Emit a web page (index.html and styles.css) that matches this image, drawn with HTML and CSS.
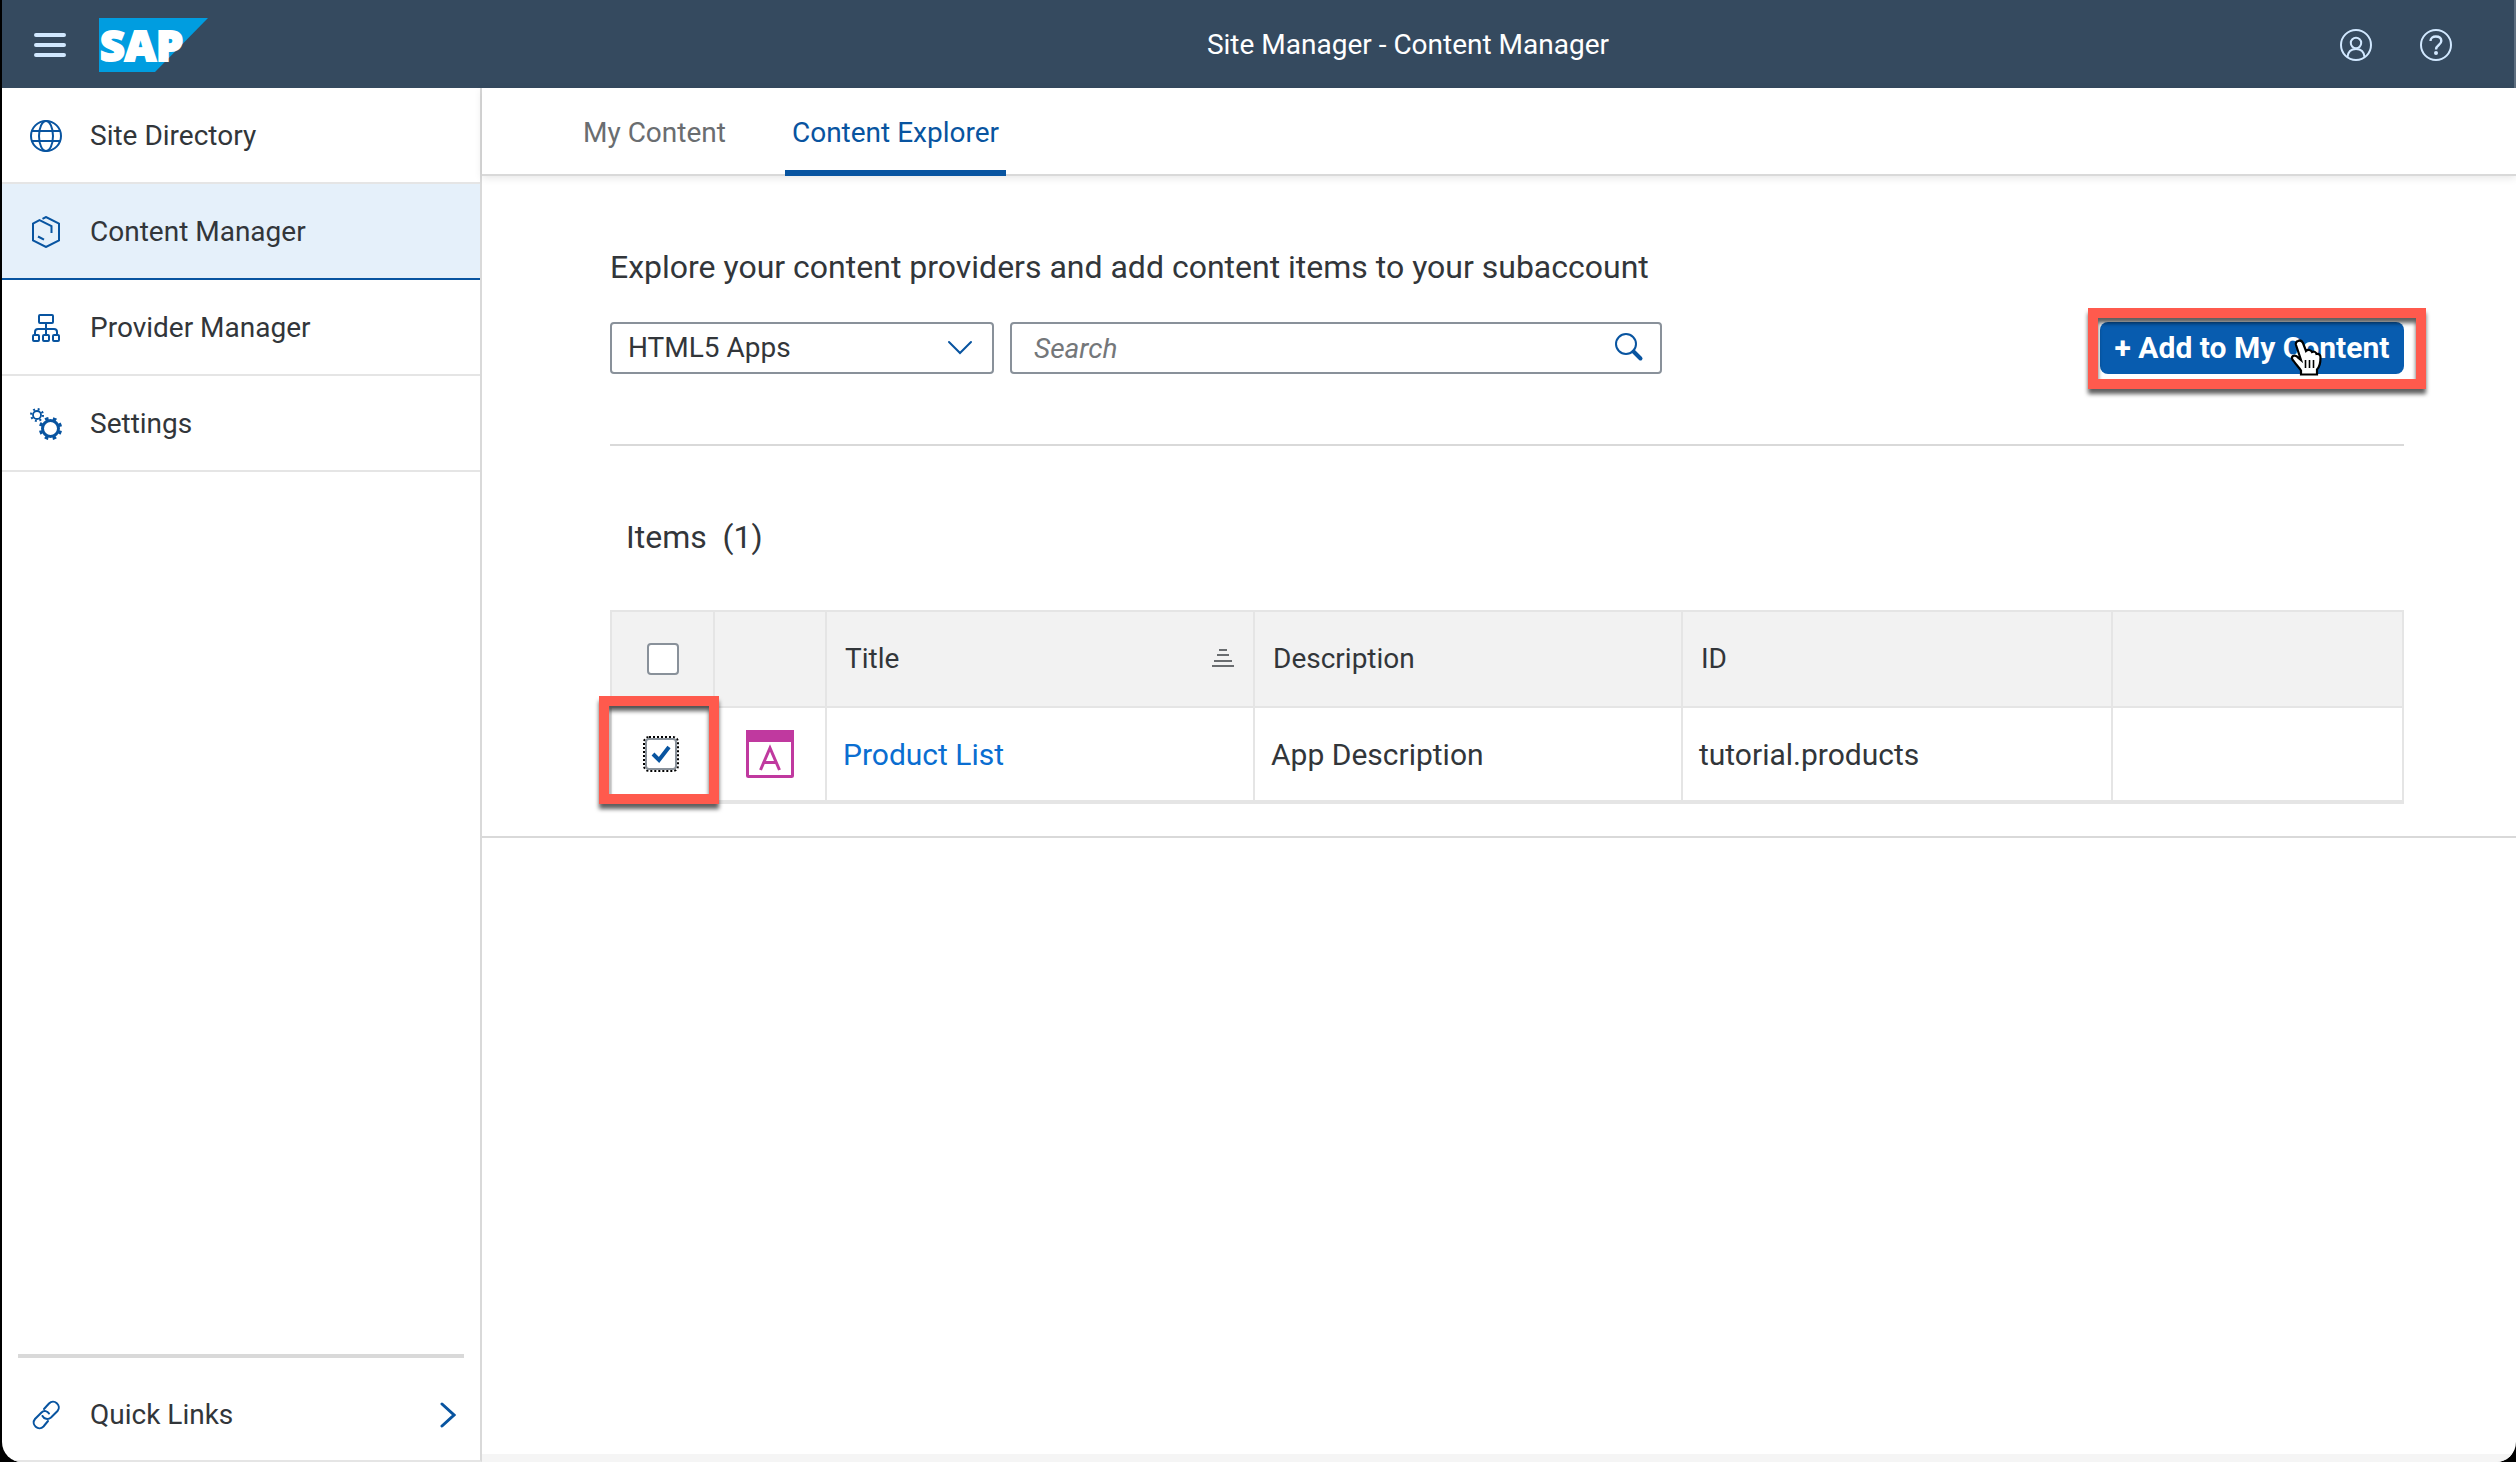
FILE: index.html
```html
<!DOCTYPE html>
<html lang="en">
<head>
<meta charset="utf-8">
<title>Site Manager - Content Manager</title>
<link rel="stylesheet" href="styles.css">
</head>
<body>
<div class="window">
  <header class="shell">
    <div class="shell-start">
      <button class="icon-button" type="button" aria-label="Menu">
        <svg width="32" height="24" viewBox="0 0 32 24"><g stroke="#d1e8ff" stroke-width="4" stroke-linecap="round"><path d="M2 2h28M2 12h28M2 22h28"/></g></svg>
      </button>
      <svg class="logo" width="110" height="54" viewBox="0 0 110 54" role="img" aria-label="SAP">
        <path d="M0 0h109L56 54H0z" fill="#009de0"/>
        <text class="logo-text" x="1" y="43">SAP</text>
      </svg>
    </div>
    <h1 class="shell-title">Site Manager - Content Manager</h1>
    <div class="shell-end">
      <button class="icon-button" type="button" aria-label="Profile">
        <svg width="32" height="32" viewBox="0 0 32 32" fill="none" stroke="#d1e8ff" stroke-width="2"><circle cx="16" cy="16" r="15"/><circle cx="16" cy="14" r="5.2"/><path d="M7.5 28c.5-5.500 4-8 8.500-8s8 2.500 8.500 8"/></svg>
      </button>
      <button class="icon-button" type="button" aria-label="Help">
        <svg width="32" height="32" viewBox="0 0 32 32" fill="none" stroke="#d1e8ff" stroke-width="2"><circle cx="16" cy="16" r="15"/><path d="M10.500 12c0-3 2.500-4.500 5.300-4.500 3 0 5.500 1.500 5.500 4.500 0 4-5.300 4-5.300 8.500" stroke-width="2.400"/><circle cx="16" cy="24" r="2" fill="#d1e8ff" stroke="none"/></svg>
      </button>
    </div>
  </header>
  <div class="body">
    <nav class="sidebar">
      <ul class="nav-list">
        <li><a class="nav-item" href="#sites">
          <svg width="32" height="32" viewBox="0 0 32 32" fill="none" stroke="#0854a0" stroke-width="2"><circle cx="16" cy="16" r="15"/><ellipse cx="16" cy="16" rx="7" ry="15"/><path d="M2 11h28M2 21h28"/></svg>
          Site Directory</a></li>
        <li><a class="nav-item nav-item-active" href="#content">
          <svg width="32" height="32" viewBox="0 0 32 32" fill="none" stroke="#0854a0" stroke-width="2"><path d="M12.500 2.800 16 1l13 6.500v17L16 31 3 24.500v-17L9.500 4.200l12 6V17M8 20.500l6 3.200"/></svg>
          Content Manager</a></li>
        <li><a class="nav-item" href="#providers">
          <svg width="32" height="32" viewBox="0 0 32 32" fill="none" stroke="#0854a0" stroke-width="2"><rect x="9" y="3" width="14" height="8" rx="1"/><rect x="3" y="23" width="6" height="6" rx="1"/><rect x="13" y="23" width="6" height="6" rx="1"/><rect x="23" y="23" width="6" height="6" rx="1"/><path d="M16 11v12M5 23v-3q0-3 3-3h16q3 0 3 3v3"/></svg>
          Provider Manager</a></li>
        <li><a class="nav-item" href="#settings">
          <svg width="32" height="32" viewBox="0 0 32 32" fill="none" stroke="#0854a0"><circle cx="7" cy="7" r="4" stroke-width="1.800"/><circle cx="7" cy="7" r="5.900" stroke-width="2.200" stroke-dasharray="1.900 2.734"/><circle cx="20.500" cy="20.500" r="8" stroke-width="3"/><circle cx="20.500" cy="20.500" r="10.200" stroke-width="3" stroke-dasharray="3.600 4.411" transform="rotate(12 20.500 20.500)"/></svg>
          Settings</a></li>
      </ul>
      <div class="quick">
        <button class="quick-links" type="button">
          <svg width="32" height="32" viewBox="0 0 32 32" fill="none" stroke="#0854a0" stroke-width="2" stroke-linecap="round"><path d="M14 10l5-5.500c5-5 13 2 8.500 7.500l-6.500 6.500c-3 2.500-7 1.500-8.500-1.500M18 22l-4.500 5.500c-5 5-13-2-8.500-7.500l6.500-6.500c2.500-2.500 6-1.500 7.500 1"/></svg>
          <span class="quick-label">Quick Links</span>
          <svg width="16" height="26" viewBox="0 0 16 26" fill="none" stroke="#0854a0" stroke-width="3" stroke-linecap="round"><path d="M2 2l12 11L2 24"/></svg>
        </button>
      </div>
    </nav>
    <main class="main">
      <div class="tabs">
        <a class="tab" href="#mine">My Content</a>
        <a class="tab tab-active" href="#explorer">Content Explorer</a>
      </div>
      <section class="panel">
        <h2 class="heading">Explore your content providers and add content items to your subaccount</h2>
        <div class="toolbar">
          <div class="select-box">
            <select class="select" aria-label="Content provider"><option>HTML5 Apps</option></select>
            <svg class="chevron" width="26" height="16" viewBox="0 0 26 16" fill="none" stroke="#0854a0" stroke-width="2" stroke-linecap="round"><path d="M2 2l11 11L24 2"/></svg>
          </div>
          <div class="search-box">
            <input class="search" type="text" placeholder="Search" aria-label="Search">
            <button class="icon-button" type="button" aria-label="Run search">
              <svg width="30" height="30" viewBox="0 0 30 30" fill="none" stroke="#0854a0" stroke-linecap="round"><circle cx="12" cy="11" r="10" stroke-width="2"/><path d="M19.500 18.500l7 7" stroke-width="4"/></svg>
            </button>
          </div>
          <div class="add-box">
            <button class="add" type="button">+ Add to My Content</button>
            <div class="mark mark-add"></div>
            <svg class="cursor" width="32" height="38" viewBox="0 0 32 38"><path d="M8 2c2-1 4 0 5 2l3 8c2-2 5-1 6 1 2-1 4 0 4.500 2 3-.5 4 1.500 4 3.500 0 5-.5 9-3.500 12v5H11v-4c-2-3-5-6-7-9-2-2-3-4-1-5.500 2-1 4 0 5.500 2L11 21 6 6c-.5-2 .5-3.500 2-4z" fill="#fff" stroke="#000" stroke-width="2.200"/><path d="M15.500 21v8M19.500 21v8M23.500 21v8" stroke="#000" stroke-width="1.600"/></svg>
          </div>
        </div>
        <h3 class="items-title">Items&nbsp; (1)</h3>
        <table class="table">
          <colgroup><col class="col-check"><col class="col-icon"><col class="col-text"><col class="col-text"><col class="col-id"><col></colgroup>
          <thead><tr>
            <th class="center"><input class="check" type="checkbox" aria-label="Select all"></th>
            <th></th>
            <th><div class="sort">Title<svg width="24" height="20" viewBox="0 0 24 20" stroke="#6a6d70" stroke-width="2"><path d="M8 1h8M6 6h12M3 12h18M1 17h22"/></svg></div></th>
            <th>Description</th><th>ID</th><th></th>
          </tr></thead>
          <tbody><tr>
            <td class="center marked"><input class="check check-focus" type="checkbox" checked aria-label="Select Product List"><div class="mark mark-check"></div></td>
            <td class="center"><svg class="app-icon" width="48" height="48" viewBox="0 0 48 48" fill="none" stroke="#c0399f"><rect x="1.500" y="1.500" width="45" height="45" rx="1" stroke-width="3"/><path d="M0 6h48" stroke-width="12"/><path d="M14.500 40L24 18l9.500 22M18 32.500h12" stroke-width="3"/></svg></td>
            <td><a class="link" href="#product-list">Product List</a></td>
            <td>App Description</td><td>tutorial.products</td><td></td>
          </tr></tbody>
        </table>
      </section>
    </main>
  </div>
</div>
</body>
</html>
```
FILE: styles.css
```css
* { box-sizing: border-box; }
body { margin: 0; background: #000; color: #32363a; font: 28px/36px Roboto, "Liberation Sans", sans-serif; }
h1, h2, h3, ul { margin: 0; padding: 0; font-weight: 400; list-style: none; }
a { color: inherit; text-decoration: none; }
svg { display: block; flex: none; }
button, input, select { font: inherit; color: inherit; }
.window { display: flex; flex-direction: column; min-height: 100vh; margin-left: 2px; background: #fff; border-radius: 0 0 20px 20px; overflow: hidden; }
.shell { display: grid; grid-template-columns: 442px 1fr auto; align-items: center; height: 88px; padding: 1px 62px 0 32px; background: #354a5f; color: #fff; border-right: 2px solid #5d6e7f; }
.shell-start { display: flex; align-items: center; gap: 33px; }
.shell-title { font-size: 28px; text-align: center; }
.shell-end { display: flex; gap: 48px; }
.icon-button { padding: 0; border: 0; background: none; }
.logo { overflow: visible; }
.logo-text { font: 800 43px/54px "Open Sans", sans-serif; fill: #fff; stroke: #fff; stroke-width: 2px; }
.body { display: flex; flex: 1; }
.sidebar { display: flex; flex-direction: column; justify-content: space-between; width: 480px; border-right: 2px solid #d9d9d9; border-bottom: 2px solid #e5e5e5; }
.nav-item { display: flex; align-items: center; gap: 28px; height: 96px; padding: 2px 28px 0; border-bottom: 2px solid #e5e5e5; }
.nav-item-active { background: #e5f0fa; border-color: #0854a0; }
.quick { margin: 0 16px; border-top: 4px solid #d9d9d9; }
.quick-links { display: flex; align-items: center; gap: 28px; width: 100%; height: 102px; padding: 12px 8px 0 12px; border: 0; background: none; text-align: left; }
.quick-label { flex: 1; }
.main { flex: 1; border-bottom: 8px solid #f5f5f5; }
.tabs { display: flex; gap: 52px; height: 88px; padding-left: 94px; border-bottom: 2px solid #d9d9d9; box-shadow: 0 2px 8px #0000001a; }
.tab { height: 88px; padding: 27px 7px 0; color: #6a6d70; }
.tab-active { border-bottom: 6px solid #0854a0; border-radius: 4px 4px 0 0; color: #0854a0; }
.panel { padding: 71px 112px 32px 128px; border-bottom: 2px solid #d9d9d9; }
.heading { font-size: 32px; line-height: 40px; }
.toolbar { display: flex; gap: 16px; margin-top: 35px; padding-bottom: 70px; border-bottom: 2px solid #d9d9d9; }
.select-box, .search-box { display: flex; align-items: center; height: 52px; border: 2px solid #89919a; border-radius: 4px; background: #fff; }
.select-box { position: relative; width: 384px; }
.select { width: 100%; height: 48px; padding: 0 16px; border: 0; background: none; appearance: none; }
.chevron { position: absolute; right: 19px; pointer-events: none; }
.search-box { width: 652px; padding-right: 16px; }
.search { flex: 1; height: 48px; padding: 0 22px; border: 0; outline: 0; background: none; }
.search::placeholder { color: #74777a; font-style: italic; opacity: 1; }
.add-box { position: relative; margin-left: auto; }
.add { width: 304px; height: 52px; padding: 0; border: 0; border-radius: 8px; background: #085caf; color: #fff; font-size: 30px; font-weight: 700; white-space: nowrap; }
.mark { position: absolute; border: 10px solid #ff5a4d; filter: drop-shadow(0 5px 2px #000000a0); pointer-events: none; }
.mark-add { inset: -14px -22px -15px -12px; }
.cursor { position: absolute; left: 190px; top: 17px; }
.items-title { margin: 71px 0 53px 16px; font-size: 32px; line-height: 40px; }
.table { width: 100%; table-layout: fixed; border-collapse: collapse; border: 2px solid #e5e5e5; border-bottom-width: 4px; }
.table th, .table td { height: 96px; padding: 0 18px; border: 2px solid #e5e5e5; font-weight: 400; text-align: left; }
.table th { background: #f2f2f2; }
.table td { height: 95px; padding: 2px 16px 0; border-bottom-width: 4px; font-size: 30px; }
.table .center { padding: 0; }
.col-check { width: 103px; }
.col-icon { width: 112px; }
.col-text { width: 428px; }
.col-id { width: 430px; }
.sort { display: flex; justify-content: space-between; align-items: center; }
.check { display: block; appearance: none; width: 32px; height: 32px; margin: 0 auto; border: 2px solid #89919a; border-radius: 4px; background: #fff; }
.check:checked { background: url("data:image/svg+xml,%3Csvg xmlns='http://www.w3.org/2000/svg' viewBox='0 0 28 28'%3E%3Cpath d='M6 14l6 6 10-13' fill='none' stroke='%230854a0' stroke-width='4'/%3E%3C/svg%3E"); }
.check-focus { outline: 2px dotted #000; }
.table .marked { position: relative; padding-right: 4px; }
.mark-check { inset: -12px -6px -4px -13px; }
.app-icon { margin: 0 auto; }
.link { color: #0a6ed1; }
```
